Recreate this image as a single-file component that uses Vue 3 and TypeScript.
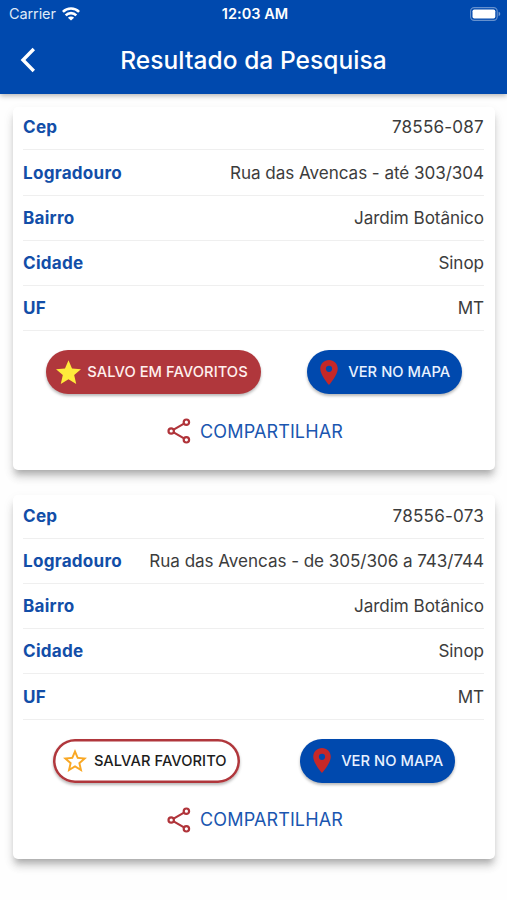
<script setup lang="ts">
interface Field {
  label: string
  value: string
  numeric?: boolean
}

interface Address {
  fields: Field[]
  saved: boolean
}

const makeAddress = (cep: string, street: string, saved: boolean): Address => ({
  fields: [
    { label: 'Cep', value: cep, numeric: true },
    { label: 'Logradouro', value: street },
    { label: 'Bairro', value: 'Jardim Botânico' },
    { label: 'Cidade', value: 'Sinop' },
    { label: 'UF', value: 'MT' },
  ],
  saved,
})

const addresses: Address[] = [
  makeAddress('78556-087', 'Rua das Avencas - até 303/304', true),
  makeAddress('78556-073', 'Rua das Avencas - de 305/306 a 743/744', false),
]
</script>

<template>
  <div class="screen">
    <header class="header">
      <div class="status">
        <div class="carrier">
          <span>Carrier</span>
          <svg class="wifi" viewBox="0 0 18 14" width="18" height="14" fill="none" stroke="#fff" stroke-width="2.6">
            <path d="M0.9 4.9a11.5 11.5 0 0 1 16.2 0" />
            <path d="M3.7 8.3a7.5 7.5 0 0 1 10.6 0" />
            <path d="M9 13.6 5.9 10.7a4.4 4.4 0 0 1 6.2 0z" fill="#fff" stroke="none" />
          </svg>
        </div>
        <span class="clock">12:03 AM</span>
        <svg class="battery" viewBox="0 0 31 14" width="31" height="14">
          <rect x="0.6" y="0.6" width="26.6" height="12.8" rx="3.6" fill="none" stroke="#fff" stroke-opacity="0.4" stroke-width="1.1" />
          <rect x="2.5" y="2.4" width="22.8" height="9.2" rx="1.8" fill="#fff" />
          <path d="M28.6 4.8q1.7.6 1.7 2.2t-1.7 2.2z" fill="#fff" fill-opacity="0.45" />
        </svg>
      </div>
      <div class="bar">
        <svg class="back" viewBox="0 0 16 26" width="16" height="26" fill="none" stroke="#fff" stroke-width="3.4">
          <path d="M13.8 2 3 13l10.800 11" />
        </svg>
        <h1 class="title">Resultado da Pesquisa</h1>
        <span></span>
      </div>
    </header>

    <main class="list">
      <article v-for="(address, i) in addresses" :key="i" class="card">
        <dl class="fields">
          <div v-for="field in address.fields" :key="field.label" class="row">
            <dt>{{ field.label }}</dt>
            <dd :class="{ numeric: field.numeric }">{{ field.value }}</dd>
          </div>
        </dl>
        <div class="actions">
          <button v-if="address.saved" class="pill saved">
            <svg class="star" viewBox="2 2 20 19" width="25" height="24">
              <path fill="#ffeb3b" d="M12 17.27 18.18 21l-1.64-7.03L22 9.24l-7.19-.61L12 2 9.19 8.63 2 9.24l5.46 4.73L5.82 21z" />
            </svg>
            <span>SALVO EM FAVORITOS</span>
          </button>
          <button v-else class="pill unsaved">
            <svg class="star" viewBox="2 2 20 19" width="24" height="23">
              <path fill="#f9a825" d="M22 9.24l-7.19-.62L12 2 9.19 8.63 2 9.24l5.46 4.73L5.82 21 12 17.27 18.18 21l-1.63-7.03L22 9.24zM12 15.4l-3.76 2.27 1-4.28-3.32-2.88 4.38-.38L12 6.1l1.71 4.04 4.38.38-3.32 2.88 1 4.28L12 15.4z" />
            </svg>
            <span>SALVAR FAVORITO</span>
          </button>
          <button class="pill map">
            <svg class="pin" viewBox="5 2 14 20" width="18" height="25">
              <path fill="#c62828" d="M12 2C8.13 2 5 5.13 5 9c0 5.25 7 13 7 13s7-7.75 7-13c0-3.87-3.13-7-7-7zm0 9.5a2.5 2.5 0 0 1 0-5 2.5 2.5 0 0 1 0 5z" />
            </svg>
            <span>VER NO MAPA</span>
          </button>
        </div>
        <button class="share">
          <svg viewBox="0 0 24 26" width="24" height="26" fill="none" stroke="#b0343a" stroke-width="2.2">
            <circle cx="4.2" cy="13" r="2.7" />
            <circle cx="19.4" cy="4.2" r="2.7" />
            <circle cx="19.4" cy="21.8" r="2.7" />
            <path d="M6.6 11.6 17 5.6M6.6 14.4 17 20.4" />
          </svg>
          <span>COMPARTILHAR</span>
        </button>
      </article>
    </main>
  </div>
</template>

<style>
body {
  margin: 0;
  background: #fefefe;
}
</style>

<style scoped>
.screen {
  box-sizing: border-box;
  width: 507px;
  height: 900px;
  overflow: hidden;
  background: #fefefe;
  font-family: Inter, "Liberation Sans", sans-serif;
}

.header {
  height: 94px;
  box-sizing: border-box;
  background: #0049ae;
  color: #fff;
  box-shadow: 0 2px 5px rgba(0, 0, 0, 0.28);
}

.status {
  display: grid;
  grid-template-columns: 1fr auto 1fr;
  align-items: center;
  height: 27px;
  padding: 0 6px 0 9px;
  font-size: 14.5px;
}

.carrier {
  display: flex;
  align-items: center;
  gap: 6px;
  color: #dfe9f7;
  letter-spacing: -0.1px;
}

.clock {
  font-size: 14.5px;
  font-weight: 600;
  letter-spacing: 0.05px;
}

.battery {
  justify-self: end;
}

.bar {
  display: grid;
  grid-template-columns: 1fr auto 1fr;
  align-items: center;
  height: 65px;
  padding: 0 20px;
}

.title {
  margin: 0;
  font-size: 24.5px;
  line-height: 30px;
  font-weight: 500;
  letter-spacing: 0.07px;
}

.list {
  display: flex;
  flex-direction: column;
  gap: 25px;
  padding: 13px 12px 0 13px;
}

.card {
  box-sizing: border-box;
  height: 363.4px;
  padding: 0 11px 0 10px;
  border-radius: 5px;
  background: #fff;
  box-shadow: 0 6px 6px -3px rgba(0, 0, 0, 0.22), 0 8px 8px 0 rgba(0, 0, 0, 0.11), 0 5px 12px 1px rgba(0, 0, 0, 0.06);
}

.fields {
  margin: 0;
}

.row {
  display: flex;
  box-sizing: border-box;
  align-items: center;
  justify-content: space-between;
  height: 45.2px;
  padding-bottom: 0.6px;
  border-bottom: 1px solid #efefef;
  font-size: 17.1px;
  white-space: nowrap;
}

.row:first-child {
  height: 43.4px;
  padding-bottom: 3px;
}

dt {
  color: #124ea8;
  font-weight: 700;
  letter-spacing: 0.24px;
}

dd {
  margin: 0;
  color: #3c3c3c;
  letter-spacing: -0.06px;
}

.numeric {
  letter-spacing: 0.2px;
}

.actions {
  display: flex;
  justify-content: space-around;
  padding-top: 19px;
}

button {
  font-family: inherit;
  border: 0;
  background: none;
}

.pill {
  display: flex;
  box-sizing: border-box;
  align-items: center;
  height: 44px;
  padding: 0;
  border-radius: 22px;
  font-size: 14.7px;
  font-weight: 500;
  white-space: nowrap;
  box-shadow: 0 2px 3px rgba(0, 0, 0, 0.28);
}

.saved {
  width: 215.5px;
  padding-left: 10px;
  gap: 6.5px;
  background: #b0373c;
  color: #fff0ee;
}

.unsaved {
  width: 187px;
  padding-left: 10px;
  gap: 7px;
  background: #fff;
  color: #1c1c1c;
  box-shadow: inset 0 0 0 2.5px #b0373c, 0 2px 3px rgba(0, 0, 0, 0.28);
}

.map {
  width: 155.5px;
  margin-right: -1px;
  padding-left: 13.5px;
  gap: 10px;
  background: #0049ae;
  color: #e8f2ff;
}

.pill span {
  letter-spacing: 0.05px;
}

.share {
  display: flex;
  align-items: center;
  gap: 9px;
  width: max-content;
  margin: 24px auto 0;
  padding: 0 0 0 3px;
  color: #1a56b0;
  font-size: 18px;
  letter-spacing: 0.12px;
}
</style>
